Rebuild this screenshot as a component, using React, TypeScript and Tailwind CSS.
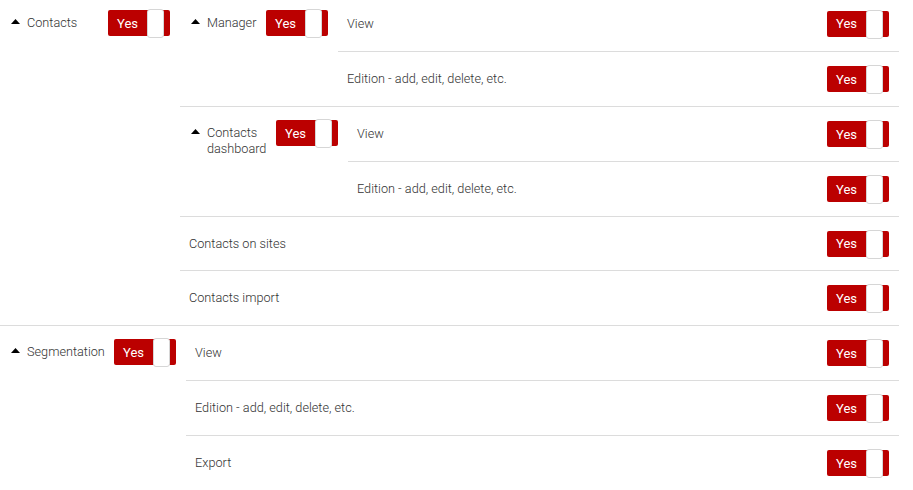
import type { ReactNode } from "react";

function Toggle() {
  return (
    <div className="relative h-[26px] w-[62px] shrink-0 rounded-[2px] bg-[#bb0000]">
      <span className="absolute left-0 top-0 flex h-[26px] w-[39px] items-center justify-center text-[13px] font-normal leading-none text-white">
        Yes
      </span>
      <span className="absolute left-[39px] top-[-1px] h-[29px] w-[17px] rounded-[3px] border border-[#d6d6d6] bg-white" />
    </div>
  );
}

function Caret() {
  return (
    <svg width="9" height="5" viewBox="0 0 9 5" className="shrink-0">
      <polygon points="0,5 4.5,0 9,5" fill="#000" />
    </svg>
  );
}

// rows are ~55px tall; some give a pixel back to a border above them
function Leaf({ label, first, under }: { label: string; first?: boolean; under?: boolean }) {
  return (
    <div
      className={`flex items-center justify-between pl-[9px] pr-[10px] ${first ? "" : "border-t border-[#dcdcdc]"} ${under ? "h-[54px]" : "h-[55px]"}`}
    >
      <span>{label}</span>
      <Toggle />
    </div>
  );
}

function Group({
  label,
  labelWidth,
  first,
  children,
}: {
  label: string;
  labelWidth: string;
  first?: boolean;
  children: ReactNode;
}) {
  return (
    <div className={`flex ${first ? "" : "border-t border-[#dcdcdc]"}`}>
      <div className={`flex shrink-0 items-start pl-[11px] pr-[10px] ${first ? "pt-[14px]" : "pt-[13px]"}`}>
        <div className="mt-[9px]">
          <Caret />
        </div>
        <span className={`ml-[7px] mr-[10px] mt-[5px] leading-[16px] ${labelWidth}`}>{label}</span>
        <Toggle />
      </div>
      <div className="flex-1">{children}</div>
    </div>
  );
}

const edition = "Edition - add, edit, delete, etc.";

export default function App() {
  return (
    <div className="w-[899px] overflow-hidden bg-white text-[12.7px] font-light text-[#333] [font-family:Roboto,'Liberation_Sans',sans-serif]">
      <div className="-mt-[4px]">
        <Group label="Contacts" labelWidth="w-[71px]" first>
          <Group label="Manager" labelWidth="w-[49px]" first>
            <Leaf label="View" first />
            <Leaf label={edition} />
          </Group>
          <Group label="Contacts dashboard" labelWidth="w-[59px]">
            <Leaf label="View" first under />
            <Leaf label={edition} />
          </Group>
          <Leaf label="Contacts on sites" under />
          <Leaf label="Contacts import" />
        </Group>
        <Group label="Segmentation" labelWidth="w-[77px]">
          <Leaf label="View" first under />
          <Leaf label={edition} />
          <Leaf label="Export" />
        </Group>
      </div>
    </div>
  );
}
